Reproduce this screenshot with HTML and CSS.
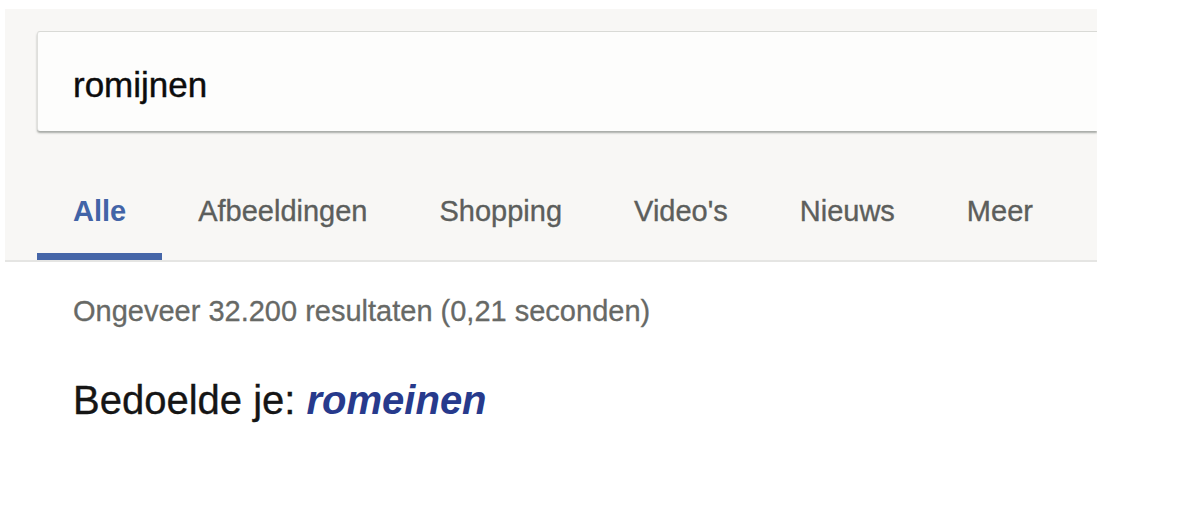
FILE: index.html
```html
<!DOCTYPE html>
<html lang="nl">
<head>
<meta charset="utf-8">
<title>romijnen - Zoeken</title>
<link rel="stylesheet" href="styles.css">
</head>
<body>
  <div class="panel">
    <div class="searchbox">
      <span class="query">romijnen</span>
    </div>
    <nav class="tabs">
      <a class="tab active">Alle</a>
      <a class="tab">Afbeeldingen</a>
      <a class="tab">Shopping</a>
      <a class="tab">Video's</a>
      <a class="tab">Nieuws</a>
      <a class="tab">Meer</a>
    </nav>
  </div>
  <div class="results">
    <div class="stats">Ongeveer 32.200 resultaten (0,21 seconden)</div>
    <div class="didyoumean">Bedoelde je: <a class="suggest">romeinen</a></div>
  </div>
</body>
</html>
```
FILE: styles.css
```css
html, body {
  margin: 0;
  padding: 0;
  background: #ffffff;
  font-family: "Liberation Sans", Arial, Helvetica, sans-serif;
}

.panel {
  margin: 9px 0 0 5px;
  width: 1092px;
  background: #f8f7f5;
  border-bottom: 2px solid #e5e5e3;
  padding: 22px 0 0 32px;
  box-sizing: border-box;
  overflow: hidden;
}

.searchbox {
  height: 100px;
  box-sizing: border-box;
  background: #fdfdfc;
  border-top: 1px solid #d9dad6;
  border-left: 1px solid #dfdfdc;
  border-radius: 3px 0 0 3px;
  box-shadow: 0 2px 2px rgba(90, 95, 90, 0.5);
  padding: 33px 0 0 35px;
}

.query {
  display: block;
  font-size: 35px;
  line-height: 40px;
  color: #0c0c0c;
  -webkit-text-stroke: 0.4px #0c0c0c;
}

.tabs {
  display: flex;
  margin-top: 63px;
}

.tab {
  display: block;
  padding: 0 36px 25px;
  font-size: 29px;
  line-height: 34px;
  color: #5c5e5c;
  -webkit-text-stroke: 0.35px #5c5e5c;
  border-bottom: 7px solid transparent;
  white-space: nowrap;
}

.tab.active {
  color: #4264a7;
  -webkit-text-stroke: 0;
  font-weight: bold;
  border-bottom-color: #4666a8;
}

.results {
  padding-left: 73px;
}

.stats {
  margin-top: 32px;
  font-size: 29px;
  line-height: 34px;
  color: #676966;
  -webkit-text-stroke: 0.3px #676966;
}

.didyoumean {
  margin-top: 49px;
  font-size: 40px;
  line-height: 46px;
  color: #151515;
  -webkit-text-stroke: 0.35px #151515;
}

.suggest {
  color: #273a8c;
  -webkit-text-stroke: 0;
  font-weight: bold;
  font-style: italic;
}
```
